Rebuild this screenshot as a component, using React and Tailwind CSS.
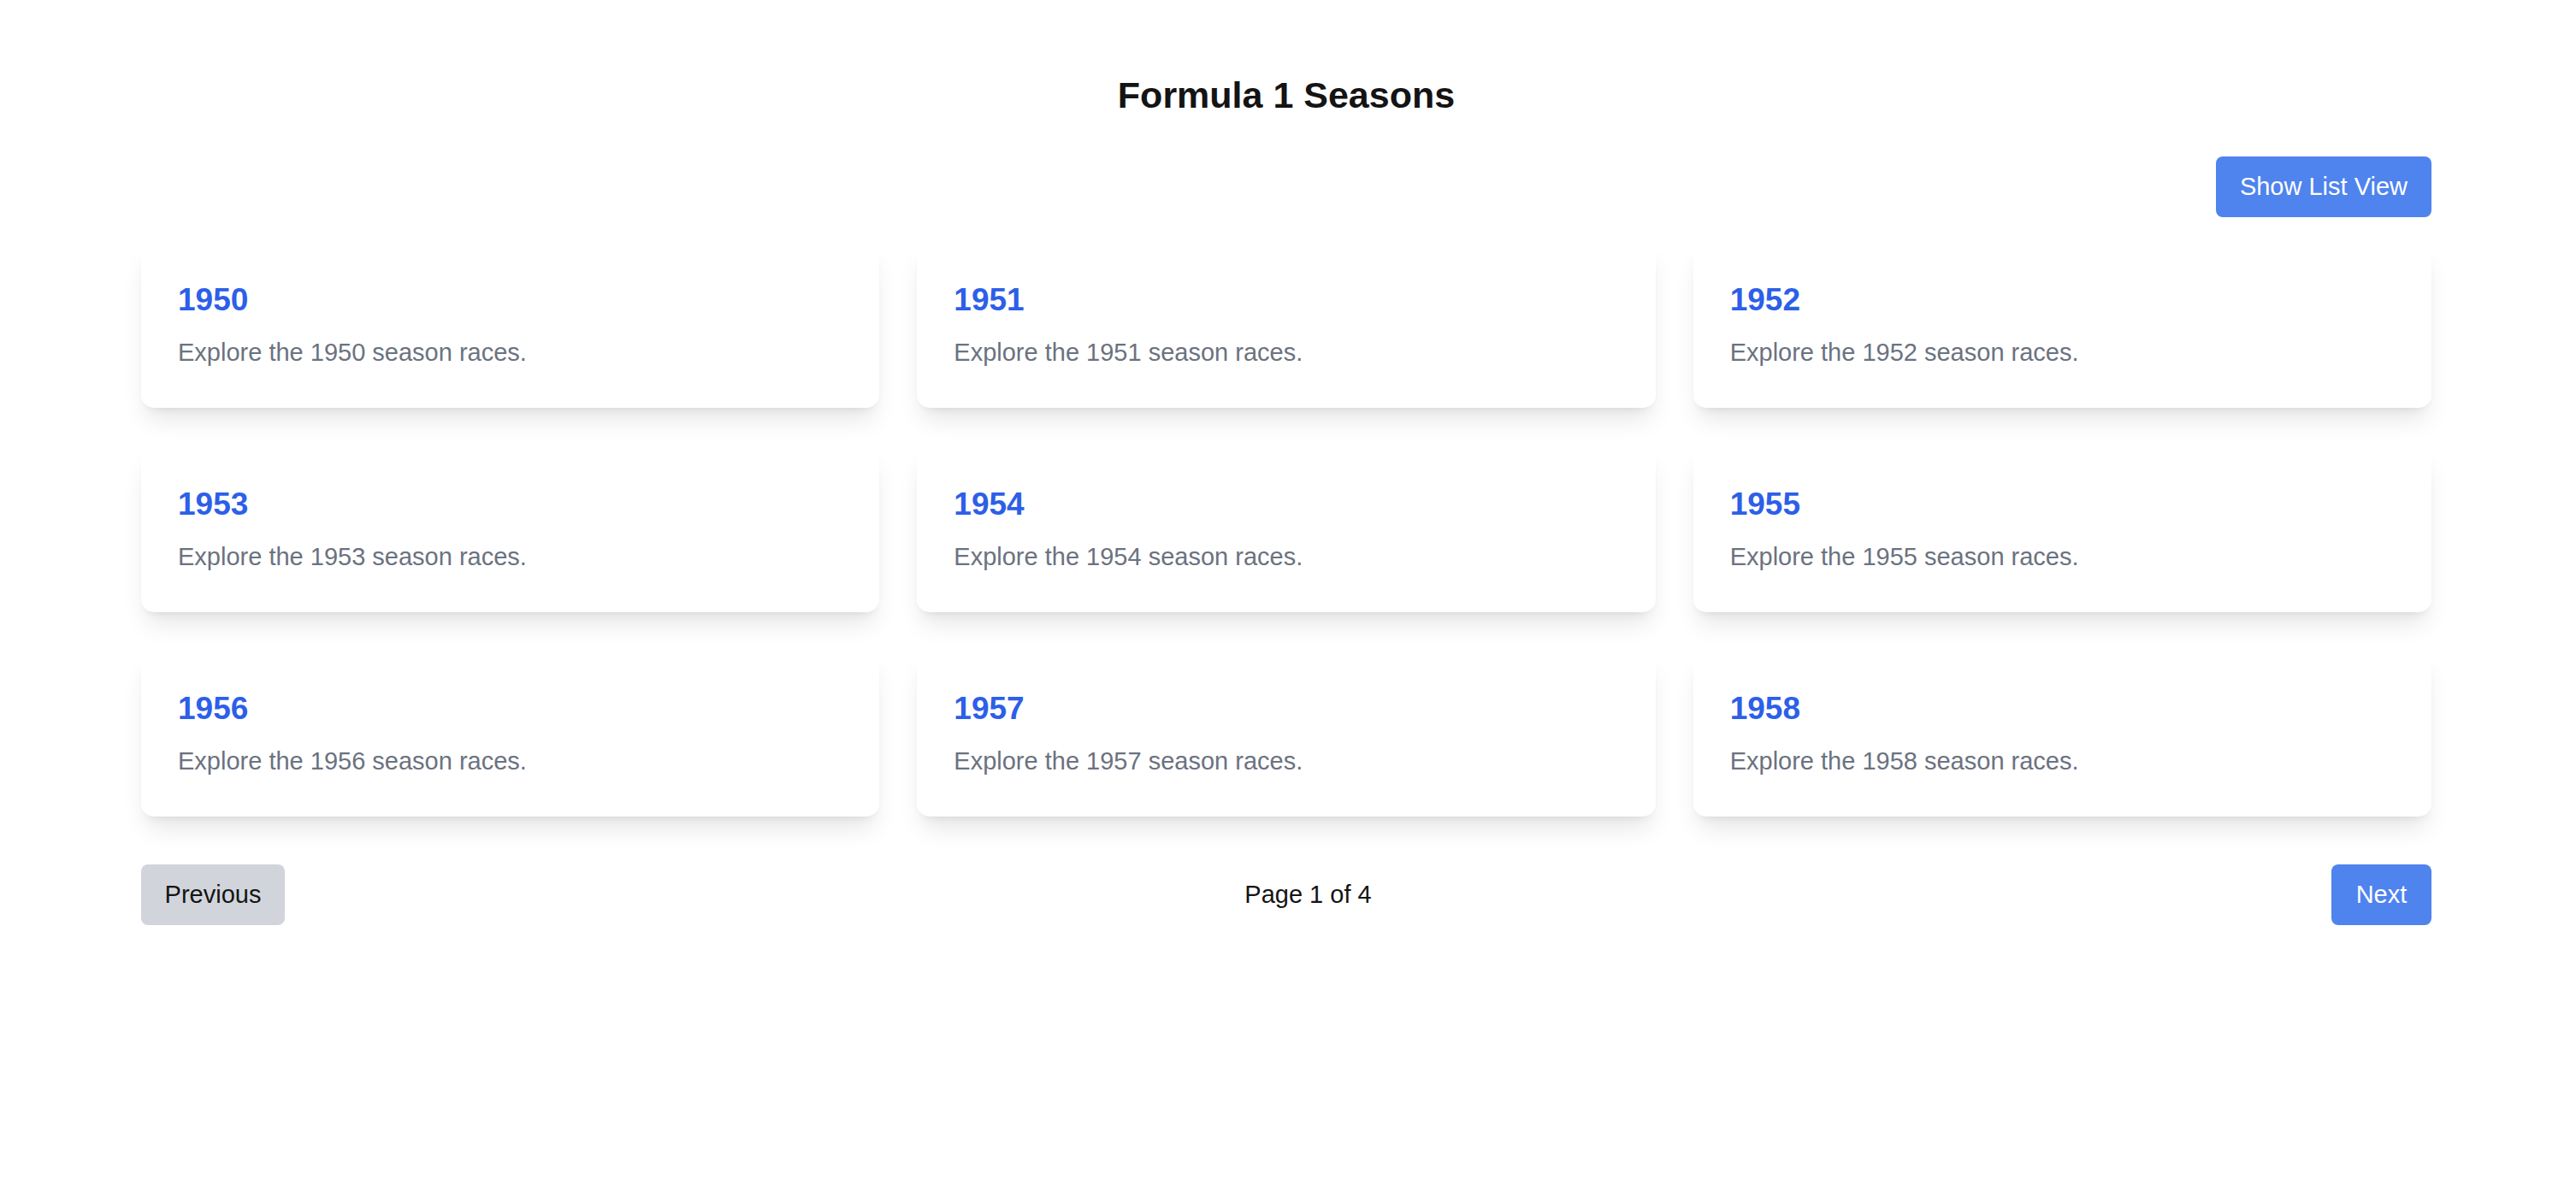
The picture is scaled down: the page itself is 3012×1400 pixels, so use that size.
import React from "react";

const years = [1950, 1951, 1952, 1953, 1954, 1955, 1956, 1957, 1958];

export default function App() {
  return (
    <div className="min-h-[1400px] w-full bg-white font-['Liberation_Sans',Arial,sans-serif] pl-[165px] pr-[169px] pt-[81px]">
      <h1 className="text-center text-[43px] leading-[60px] font-bold text-[#141414]">
        Formula 1 Seasons
      </h1>
      <div className="flex justify-end mt-[42px]">
        <button className="h-[71px] px-[28px] rounded-[8px] bg-[#4f83ee] text-white text-[29px] leading-[45px]">
          Show List View
        </button>
      </div>
      <div className="grid grid-cols-3 gap-x-[44px] gap-y-[45px] mt-[29px]">
        {years.map((y) => (
          <div
            key={y}
            className="bg-white rounded-[15px] px-[43px] pt-[43px] h-[194px] shadow-[0_19px_28px_-6px_rgba(0,0,0,0.1),0_7px_11px_-7px_rgba(0,0,0,0.1)]"
          >
            <h2 className="text-[37px] leading-[50px] font-bold text-[#2d5fe8]">{y}</h2>
            <p className="mt-[14px] text-[29px] leading-[44px] text-[#6b7280]">
              Explore the {y} season races.
            </p>
          </div>
        ))}
      </div>
      <div className="flex justify-between items-center mt-[56px]">
        <button className="h-[71px] w-[168px] rounded-[8px] bg-[#d1d5db] text-[#141414] text-[29px] leading-[45px]">
          Previous
        </button>
        <span className="text-[29px] leading-[45px] text-[#141414]">Page 1 of 4</span>
        <button className="h-[71px] w-[117px] rounded-[8px] bg-[#4f83ee] text-white text-[29px] leading-[45px]">
          Next
        </button>
      </div>
    </div>
  );
}
